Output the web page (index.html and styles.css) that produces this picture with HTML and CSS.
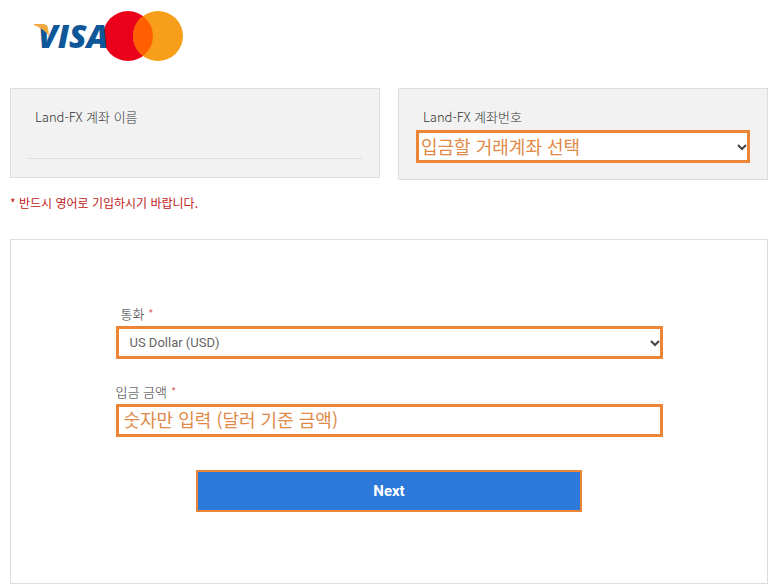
FILE: index.html
```
<!DOCTYPE html>
<html lang="ko">

<head>
    <meta charset="UTF-8">
    <meta name="viewport" content="width=device-width, initial-scale=1.0">
    <title>Land-FX 입금</title>
    <link rel="stylesheet" href="styles.css">
</head>

<body>
    <form class="deposit">
        <svg class="logo" width="152" height="54" viewBox="0 0 152 54" role="img" aria-label="VISA Mastercard">
            <circle cx="95" cy="27" r="25" fill="#eb001b" />
            <circle cx="125" cy="27" r="25" fill="#f79e1b" />
            <path d="M110 7a25 25 0 0 1 0 40a25 25 0 0 1 0-40z" fill="#ff5f00" />
            <text class="logo-text" x="5" y="39">VISA</text>
            <path d="M1 15h9q4 0 5 4l1 8q-5-7-15-11z" fill="#f0a840" />
        </svg>

        <div class="account">
            <div class="card">
                <label class="card-label" for="name">Land-FX 계좌 이름</label>
                <input class="line-input" id="name" type="text">
            </div>
            <div class="card">
                <label class="card-label" for="account">Land-FX 계좌번호</label>
                <select class="control hint" id="account">
                    <option>입금할 거래계좌 선택</option>
                </select>
            </div>
        </div>

        <p class="notice">* 반드시 영어로 기입하시기 바랍니다.</p>

        <div class="panel">
            <div class="fields">
                <div class="field">
                    <label class="field-label indent" for="currency">통화 <span class="required">*</span></label>
                    <select class="control currency" id="currency">
                        <option>US Dollar (USD)</option>
                    </select>
                </div>
                <div class="field">
                    <label class="field-label" for="amount">입금 금액 <span class="required">*</span></label>
                    <input class="control hint amount" id="amount" type="text" placeholder="숫자만 입력 (달러 기준 금액)">
                </div>
                <button class="next" type="submit">Next</button>
            </div>
        </div>
    </form>
</body>

</html>
```

FILE: styles.css
```
* {
    box-sizing: border-box;
}

body {
    margin: 0;
    background: #fff;
    color: #333;
    font-family: "Noto Sans CJK KR", sans-serif;
    font-size: 13px;
    line-height: 18px;
}

.deposit {
    padding: 9px 5px 3px 10px;
}

.logo {
    display: block;
    margin: 0 0 25px 23px;
}

.logo-text {
    fill: #0e5799;
    font: italic 800 32px "Open Sans", sans-serif;
}

.account {
    display: grid;
    grid-template-columns: 1fr 1fr;
    gap: 18px;
    align-items: start;
}

.card {
    padding: 19px 17px 16px;
    border: 1px solid #ddd;
    background: #f2f2f2;
}

.card-label {
    display: block;
    padding-left: 7px;
    margin-bottom: 4px;
    font-weight: 300;
}

.line-input {
    display: block;
    width: 100%;
    height: 29px;
    padding: 0 7px;
    margin-bottom: 2px;
    border: 0;
    border-bottom: 1px solid #ddd;
    background: transparent;
    font: inherit;
}

.control {
    display: block;
    width: 100%;
    height: 33px;
    border: 3px solid #ed8536;
    border-radius: 0;
    background: #fff;
    color: #666;
    font: 13px Roboto, sans-serif;
}

select.control {
    appearance: none;
    background: #fff url("data:image/svg+xml,%3Csvg xmlns='http://www.w3.org/2000/svg' width='10' height='8'%3E%3Cpath d='M1 2l4 4 4-4' fill='none' stroke='%23444' stroke-width='2'/%3E%3C/svg%3E") no-repeat right center;
}

.control.hint {
    padding: 0 2px 2px;
    color: #e08a48;
    font: 18px "Noto Sans CJK KR", sans-serif;
}

.control.currency {
    padding: 0 11px;
}

.control.amount {
    padding: 0 5px 4px;
}

.amount::placeholder {
    color: #e08a48;
    opacity: 1;
}

.notice {
    margin: 14px 0 27px;
    color: #c02020;
    font-size: 12px;
}

.panel {
    padding: 65px 16px 71px;
    border: 1px solid #ddd;
}

.fields {
    max-width: 547px;
    margin: 0 auto;
}

.field {
    margin-bottom: 24px;
}

.field-label {
    display: block;
    margin-bottom: 3px;
    font-weight: 300;
}

.indent {
    padding-left: 5px;
}

.required {
    color: #d9534f;
}

.next {
    display: block;
    width: 100%;
    max-width: 386px;
    height: 42px;
    margin: 33px auto 0;
    border: 2px solid #ed8536;
    background: #2d79d9;
    color: #fff;
    font: bold 15px Roboto, sans-serif;
}
```
